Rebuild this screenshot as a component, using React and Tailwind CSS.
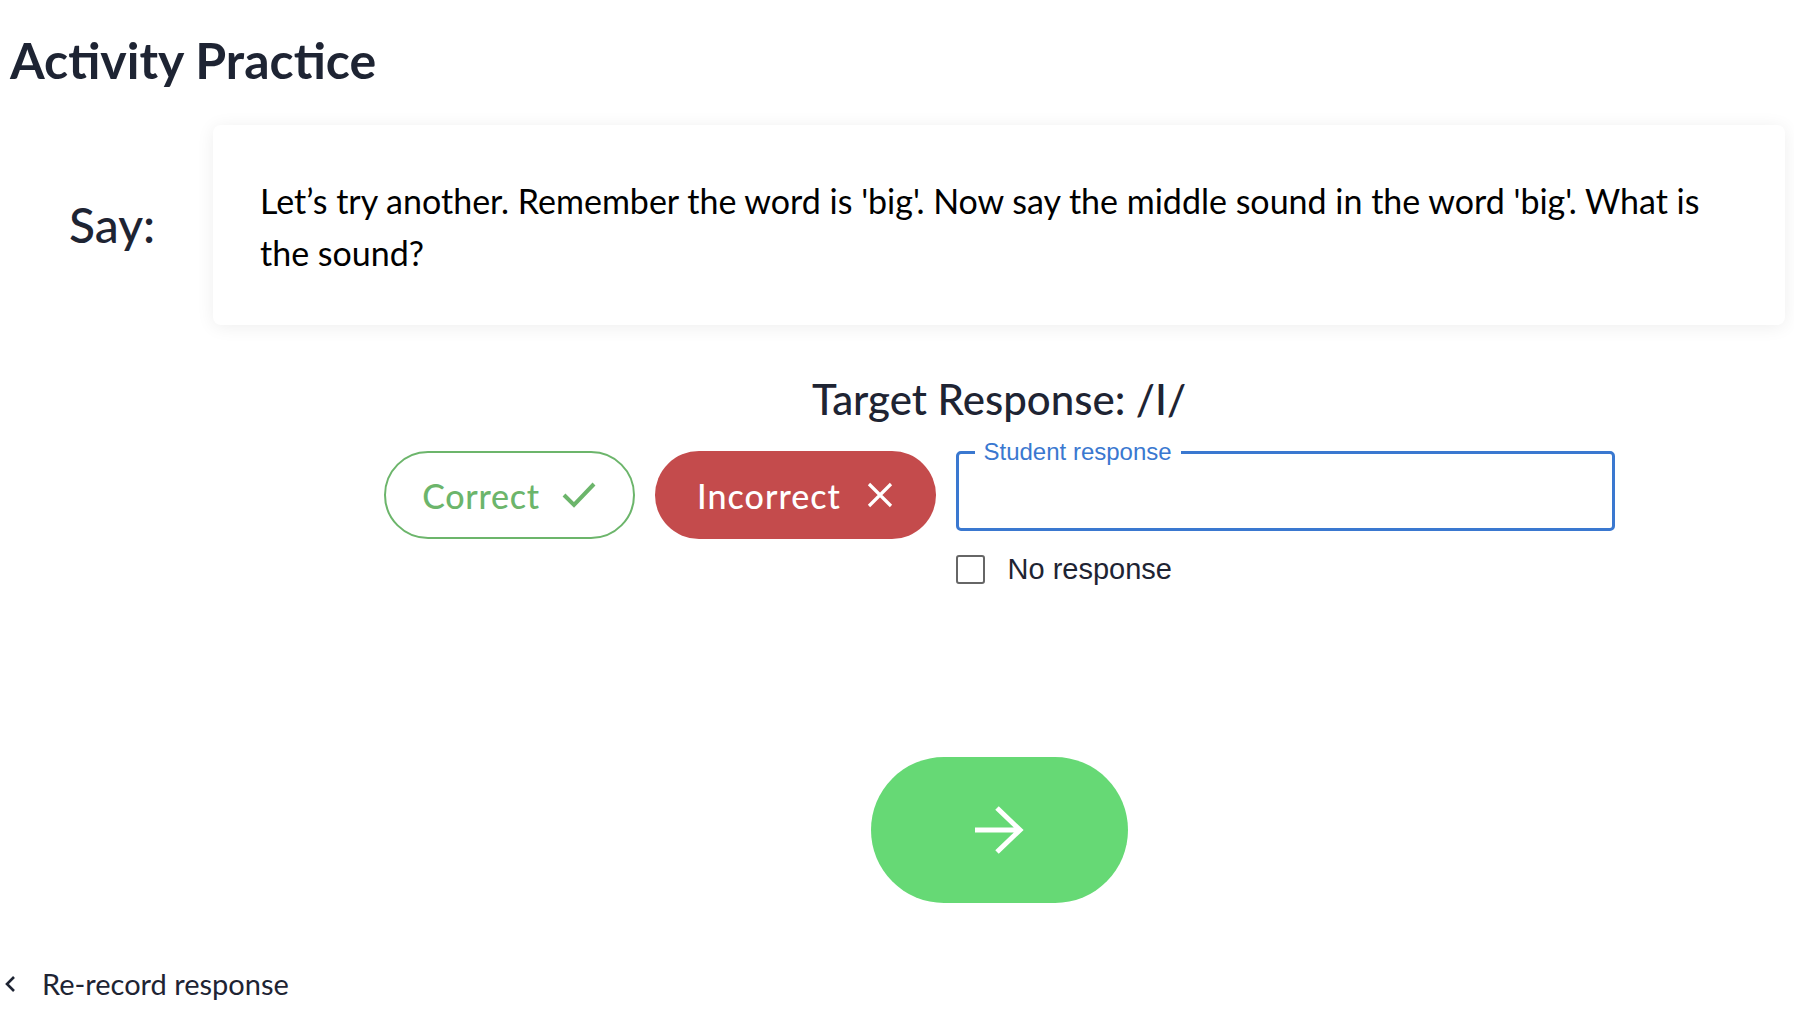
import { useState } from "react";

const font = { fontFamily: "Lato, 'Noto Sans', sans-serif" };

export default function App() {
  const [answer, setAnswer] = useState("incorrect");
  const [text, setText] = useState("");
  const [noResponse, setNoResponse] = useState(false);

  return (
    <div className="w-[1794px] h-[1016px] bg-white text-[#1e2433] flex flex-col" style={font}>
      {/* Title */}
      <h1 className="pt-[32px] pl-[10px] text-[50px] leading-[56px] font-bold text-[#1e2433]">
        Activity Practice
      </h1>

      <div className="flex mt-[37px]">
        {/* Say column */}
        <div className="w-[213px] h-[200px] flex items-center pl-[69px]">
          <span className="text-[48px] leading-none font-medium">Say:</span>
        </div>

        <div className="flex-1 mr-[9px] flex flex-col items-center">
          {/* Prompt card */}
          <div className="w-full h-[200px] bg-white rounded-lg shadow-[0_2px_18px_rgba(0,0,0,0.07)] pl-[47px] pr-[40px] pt-[50px]">
            <p className="text-[34px] leading-[52px] text-black">
              Let’s try another. Remember the word is 'big'. Now say the middle sound in the word 'big'. What is the sound?
            </p>
          </div>

          {/* Target */}
          <p className="mt-[50px] text-[42px] leading-[48px] font-medium">Target Response: /I/</p>

          {/* Answer row */}
          <div className="mt-[28px] flex items-start gap-[20px]">
            <button
              onClick={() => setAnswer("correct")}
              className={`w-[251px] h-[88px] rounded-full border-2 border-[#6cb56b] flex items-center justify-center gap-[22px] text-[34px] tracking-[0.02em] font-medium ${
                answer === "correct" ? "bg-[#6cb56b] text-white" : "bg-white text-[#6cb56b]"
              }`}
            >
              Correct
              <svg width="34" height="28" viewBox="0 0 34 28" fill="none" stroke="currentColor" strokeWidth="4">
                <path d="M2 14 L12 24 L32 3" />
              </svg>
            </button>
            <button
              onClick={() => setAnswer("incorrect")}
              className={`w-[281px] h-[88px] rounded-full flex items-center justify-center gap-[26px] text-[34px] tracking-[0.03em] font-medium ${
                answer === "incorrect" ? "bg-[#c44b4c] text-white" : "bg-white text-[#c44b4c] border-2 border-[#c44b4c]"
              }`}
            >
              Incorrect
              <svg width="26" height="26" viewBox="0 0 26 26" fill="none" stroke="currentColor" strokeWidth="3.2">
                <path d="M2 2 L24 24 M24 2 L2 24" />
              </svg>
            </button>

            <div className="flex flex-col">
              <div className="relative w-[659px] h-[80px] border-[3px] border-[#3a78d0] rounded-[5px]">
                <span
                  className="absolute -top-[17px] left-[16px] px-[9px] bg-white text-[24px] leading-[30px] text-[#3a78d0]"
                  style={{ fontFamily: "'Liberation Sans', Arial, sans-serif" }}
                >
                  Student response
                </span>
                <input
                  value={text}
                  onChange={(e) => setText(e.target.value)}
                  className="w-full h-full px-[24px] text-[26px] outline-none bg-transparent"
                />
              </div>
              <label
                className="mt-[22px] flex items-center gap-[23px] cursor-pointer"
                style={{ fontFamily: "'Liberation Sans', Arial, sans-serif" }}
              >
                <span
                  onClick={() => setNoResponse(!noResponse)}
                  className="w-[29px] h-[29px] border-2 border-[#666] rounded-[3px] flex items-center justify-center"
                >
                  {noResponse && (
                    <svg width="18" height="18" viewBox="0 0 18 18" fill="none" stroke="#666" strokeWidth="2.5">
                      <path d="M2 9 L7 14 L16 3" />
                    </svg>
                  )}
                </span>
                <span className="text-[29px] leading-[32px] text-[#1e2433]">No response</span>
              </label>
            </div>
          </div>

          {/* Next */}
          <button className="mt-[172px] w-[257px] h-[146px] rounded-full bg-[#66d975] flex items-center justify-center">
            <svg width="50" height="48" viewBox="0 0 50 48" fill="none" stroke="white" strokeWidth="5">
              <path d="M1 24 H46 M23 2 L46 24 L23 46" />
            </svg>
          </button>
        </div>
      </div>

      {/* Re-record */}
      <button className="mt-[65px] ml-[5px] flex items-center gap-[26px] text-[29px] leading-[32px] text-[#1e2433] w-fit">
        <svg width="11" height="18" viewBox="0 0 11 18" fill="none" stroke="currentColor" strokeWidth="2.6">
          <path d="M9 2 L2 9 L9 16" />
        </svg>
        Re-record response
      </button>
    </div>
  );
}
